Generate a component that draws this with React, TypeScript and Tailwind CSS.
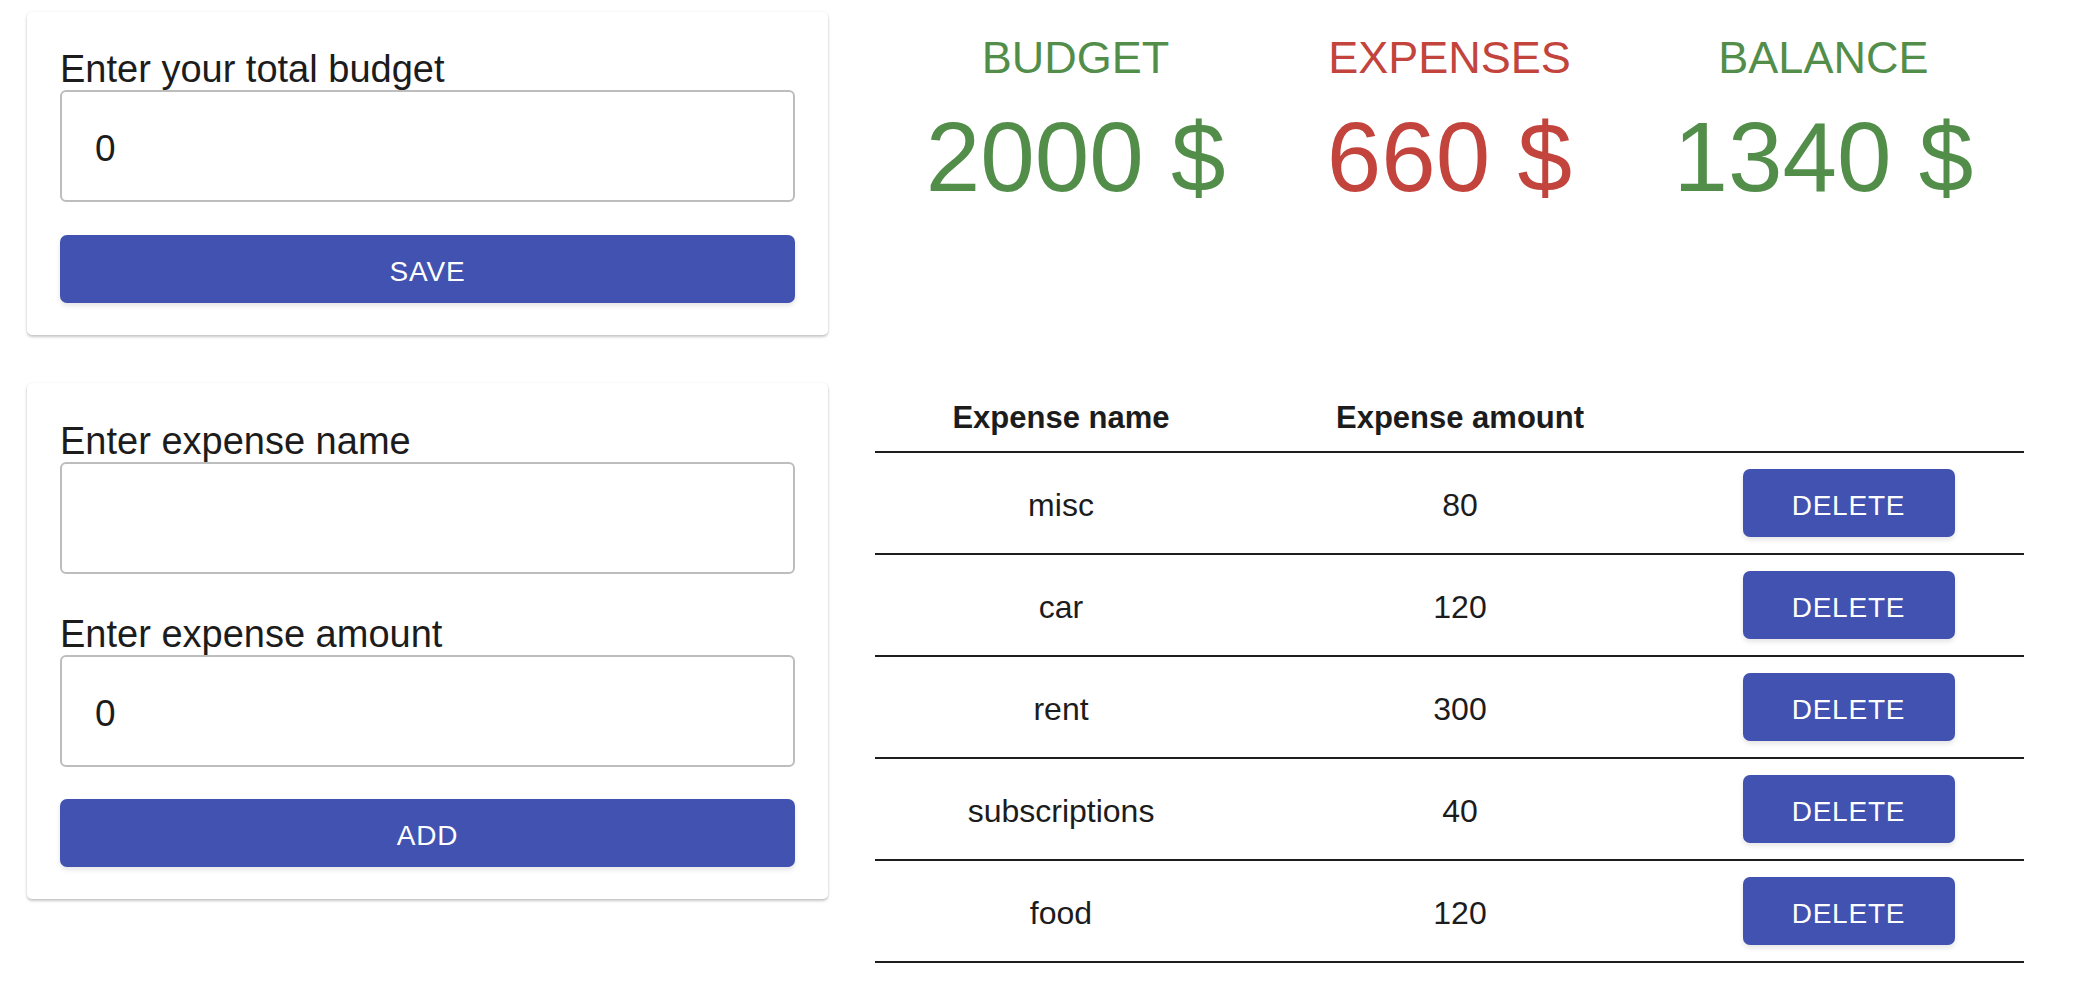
import { useState } from "react";

type Expense = { id: number; name: string; amount: number };

const initialExpenses: Expense[] = [
    { id: 1, name: "misc", amount: 80 },
    { id: 2, name: "car", amount: 120 },
    { id: 3, name: "rent", amount: 300 },
    { id: 4, name: "subscriptions", amount: 40 },
    { id: 5, name: "food", amount: 120 },
];

function Field({ label, value, className = "" }: { label: string; value: string; className?: string }) {
    return (
        <label className={`block ${className}`}>
            <span className="block pt-[2px] text-[38px] leading-[41px] text-[#1c1c1c]">{label}</span>
            <input
                defaultValue={value}
                className="block h-[112px] w-full rounded-[6px] border-2 border-[#bdbdbd] bg-white px-[33px] pt-[5px] text-[37px] text-[#1c1c1c] outline-none"
            />
        </label>
    );
}

function PrimaryButton({ children, className = "" }: { children: React.ReactNode; className?: string }) {
    return (
        <button
            className={`
        flex items-center justify-center
        rounded-[7px]
        bg-[#4152b1]
        pt-[5px]
        text-white uppercase tracking-[0.8px] leading-none
        shadow-[0_3px_5px_rgba(0,0,0,0.1)]
        ${className}
      `}
        >
            {children}
        </button>
    );
}

export default function App() {
    const [budget] = useState(2000);
    const [expenses] = useState(initialExpenses);
    const spent = expenses.reduce((s, e) => s + e.amount, 0);
    const balance = budget - spent;

    return (
        <div className="min-h-screen bg-white font-['Liberation_Sans',Arial,sans-serif]">
            <div className="grid grid-cols-[801px_1149px] gap-x-[47px] gap-y-[48px] pl-[27px] pt-[12px]">
                {/* budget card */}
                <div className="rounded-[5px] bg-white px-[33px] pt-[35px] pb-[32px] shadow-[0_2px_3px_rgba(0,0,0,0.22),0_0_2px_rgba(0,0,0,0.08)]">
                    <Field label="Enter your total budget" value="0" />
                    <PrimaryButton className="mt-[33px] h-[68px] w-full text-[28px]">Save</PrimaryButton>
                </div>

                {/* totals */}
                <div className="flex justify-around pt-[20px] text-center">
                    <div className="text-[#528e4a]">
                        <div className="text-[45px] leading-[52px]">BUDGET</div>
                        <div className="mt-[16px] text-[98px] leading-[115px]">{budget} $</div>
                    </div>
                    <div className="text-[#c2443c]">
                        <div className="text-[45px] leading-[52px]">EXPENSES</div>
                        <div className="mt-[16px] text-[98px] leading-[115px]">{spent} $</div>
                    </div>
                    <div className="text-[#528e4a]">
                        <div className="text-[45px] leading-[52px]">BALANCE</div>
                        <div className="mt-[16px] text-[98px] leading-[115px]">{balance} $</div>
                    </div>
                </div>

                {/* expense card */}
                <div className="self-start rounded-[5px] bg-white px-[33px] pt-[36px] pb-[32px] shadow-[0_2px_3px_rgba(0,0,0,0.22),0_0_2px_rgba(0,0,0,0.08)]">
                    <Field label="Enter expense name" value="" />
                    <Field label="Enter expense amount" value="0" className="mt-[38px]" />
                    <PrimaryButton className="mt-[32px] h-[68px] w-full text-[28px]">Add</PrimaryButton>
                </div>

                {/* expense table */}
                <div className="self-start text-[#1c1c1c]">
                    <div className="grid h-[70px] grid-cols-[372px_426px_351px] items-center border-b-2 border-[#1e1e1e] pt-[2px] text-[31px] font-bold">
                        <div className="text-center">Expense name</div>
                        <div className="text-center">Expense amount</div>
                        <div />
                    </div>
                    {expenses.map((e) => (
                        <div
                            key={e.id}
                            className="grid h-[102px] grid-cols-[372px_426px_351px] items-center border-b-2 border-[#1e1e1e] text-[32px]"
                        >
                            <div className="pt-[4px] text-center">{e.name}</div>
                            <div className="pt-[4px] text-center">{e.amount}</div>
                            <div className="flex justify-center">
                                <PrimaryButton className="h-[68px] w-[212px] text-[28px]">Delete</PrimaryButton>
                            </div>
                        </div>
                    ))}
                </div>
            </div>
        </div>
    );
}
